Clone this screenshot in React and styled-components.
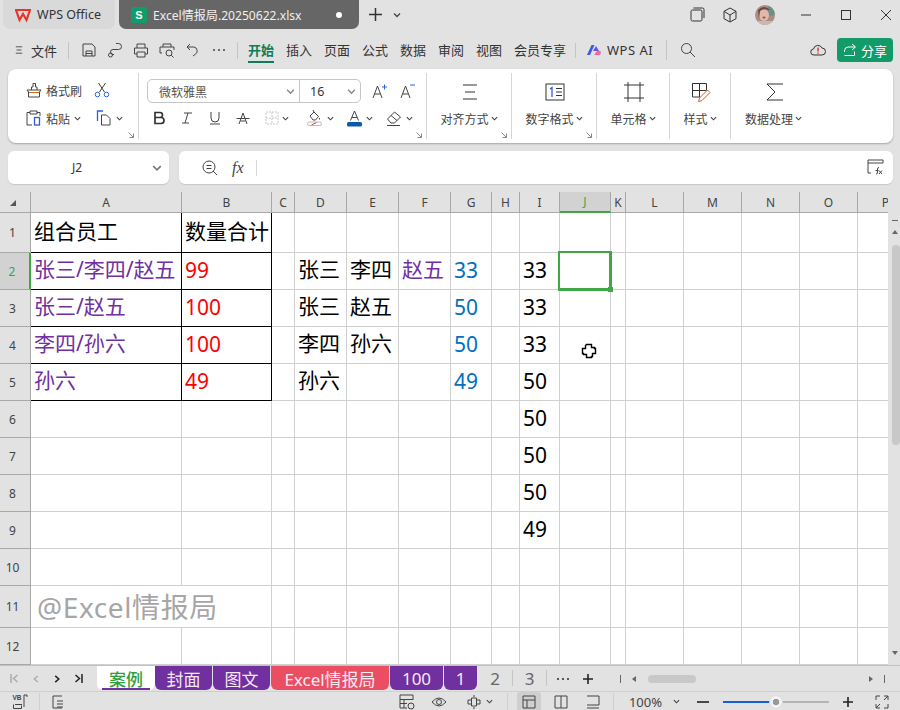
import React from 'react';
import styled, { createGlobalStyle } from 'styled-components';

const UI_FONT = `"Noto Sans", "Noto Sans CJK SC", sans-serif`;
const CJK_FONT = `"Noto Sans CJK SC", "Noto Sans", sans-serif`;

const COLUMNS = [
  ['A', 151], ['B', 90], ['C', 23], ['D', 52], ['E', 52], ['F', 52], ['G', 41], ['H', 28],
  ['I', 40], ['J', 51], ['K', 15], ['L', 58], ['M', 58], ['N', 58], ['O', 58], ['P', 56],
];
const ROW_HEIGHTS = [40, 37, 37, 37, 37, 37, 37, 37, 37, 37, 42, 37];

const PURPLE = '#7030a0';
const RED = '#ff0000';
const BLUE = '#0070c0';

const CELLS = {
  A1: { text: '组合员工', box: true, cjk: true },
  B1: { text: '数量合计', box: true, cjk: true },
  A2: { text: '张三/李四/赵五', color: PURPLE, box: true, cjk: true },
  B2: { text: '99', color: RED, box: true },
  D2: { text: '张三', cjk: true }, E2: { text: '李四', cjk: true }, F2: { text: '赵五', color: PURPLE, cjk: true },
  G2: { text: '33', color: BLUE }, I2: { text: '33' },
  A3: { text: '张三/赵五', color: PURPLE, box: true, cjk: true },
  B3: { text: '100', color: RED, box: true },
  D3: { text: '张三', cjk: true }, E3: { text: '赵五', cjk: true }, G3: { text: '50', color: BLUE }, I3: { text: '33' },
  A4: { text: '李四/孙六', color: PURPLE, box: true, cjk: true },
  B4: { text: '100', color: RED, box: true },
  D4: { text: '李四', cjk: true }, E4: { text: '孙六', cjk: true }, G4: { text: '50', color: BLUE }, I4: { text: '33' },
  A5: { text: '孙六', color: PURPLE, box: true, cjk: true },
  B5: { text: '49', color: RED, box: true },
  D5: { text: '孙六', cjk: true }, G5: { text: '49', color: BLUE }, I5: { text: '50' },
  I6: { text: '50' }, I7: { text: '50' }, I8: { text: '50' }, I9: { text: '49' },
};

const SHEETS = [
  { name: '封面', width: 57 },
  { name: '图文', width: 57 },
  { name: 'Excel情报局', width: 118, bg: '#e94e63' },
  { name: '100', width: 53 },
  { name: '1', width: 33 },
];

const MENU_TABS = ['插入', '页面', '公式', '数据', '审阅', '视图', '会员专享'];

const GlobalStyle = createGlobalStyle`
  html, body { margin: 0; padding: 0; background: #e2e2e2; }
  * { box-sizing: border-box; }
`;

const Glyph = styled.svg`
  width: ${p => p.$size || 16}px;
  height: ${p => p.$size || 16}px;
  flex: none;
  fill: none;
  stroke: ${p => p.$color || '#444'};
  stroke-width: ${p => p.$stroke || 1};
`;

const Chevron = ({ size = 7, color = '#444' }) => (
  <Glyph $size={size} $color={color} $stroke={1.3} viewBox="0 0 8 8">
    <path d="M1 2.5 4 5.5 7 2.5" />
  </Glyph>
);

const Page = styled.div`
  width: 900px;
  height: 710px;
  overflow: hidden;
  display: flex;
  flex-direction: column;
  background: #e2e2e2;
  font-family: ${UI_FONT};
  color: #333;
`;

/* title bar */
const TitleBar = styled.div`
  height: 29px;
  flex: none;
  display: flex;
  align-items: stretch;
  padding-left: 3px;
`;

const HomeTab = styled.div`
  width: 112px;
  display: flex;
  align-items: center;
  gap: 6px;
  padding-left: 12px;
  background: #d9d9d9;
  border-radius: 0 0 7px 7px;
  font-size: 12.5px;
  color: #333;
`;

const FileTab = styled.div`
  width: 240px;
  margin-left: 4px;
  display: flex;
  align-items: center;
  padding: 0 17px 0 12px;
  background: #666;
  border-radius: 0 0 7px 7px;
  color: #f0f0f0;
  font-size: 12.1px;
`;

const SheetBadge = styled.span`
  width: 16px;
  height: 16px;
  margin-right: 6px;
  border-radius: 2px;
  background: #0f9d68;
  color: #fff;
  font: bold 11px/16px "Liberation Sans", sans-serif;
  text-align: center;
`;

const FileName = styled.span`
  flex: 1;
  white-space: nowrap;
`;

const Dot = styled.span`
  width: 6px;
  height: 6px;
  border-radius: 50%;
  background: #fff;
`;

const AddTab = styled.div`
  margin-left: 9px;
  display: flex;
  align-items: center;
  gap: 10px;
`;

const ExtraTools = styled.div`
  margin-left: auto;
  display: flex;
  align-items: center;
  gap: 17px;
`;

const WindowButtons = styled.div`
  margin-left: 25px;
  display: flex;
  align-items: center;
  gap: 28px;
  padding-right: 8px;
`;

const Avatar = styled.svg`
  width: 20px;
  height: 20px;
  border-radius: 50%;
`;

/* menu bar */
const MenuBar = styled.div`
  height: 40px;
  flex: none;
  display: flex;
  align-items: center;
  padding: 2px 7px 0 15px;
  font-family: ${CJK_FONT};
  font-size: 13px;
  color: #333;
`;

const MenuLabel = styled.span`
  margin-left: 8px;
`;

const Divider = styled.span`
  width: 1px;
  height: ${p => p.$h || 17}px;
  margin: 0 ${p => p.$m || 11}px;
  background: #c4c4c4;
  flex: none;
`;

const QuickTools = styled.div`
  display: flex;
  align-items: center;
  gap: 10px;
  margin-left: 1px;
`;

const MenuTab = styled.span`
  position: relative;
  margin-right: 12px;
  white-space: nowrap;
  line-height: 18px;
  color: ${p => (p.$active ? '#0e7d57' : '#333')};
  font-weight: ${p => (p.$active ? 700 : 400)};
  width: ${p => p.$w || 26}px;
  ${p => p.$active && `
    &::after {
      content: "";
      position: absolute;
      left: 0;
      right: 0;
      bottom: -4px;
      height: 2px;
      background: #0e7d57;
    }
  `}
`;

const AiLabel = styled.span`
  margin-left: 5px;
  font-family: ${UI_FONT};
  font-size: 13px;
  letter-spacing: 0.5px;
`;

const MenuRight = styled.div`
  margin-left: auto;
  display: flex;
  align-items: center;
  gap: 11px;
`;

const ShareButton = styled.div`
  width: 56px;
  height: 24px;
  display: flex;
  align-items: center;
  justify-content: center;
  gap: 4px;
  border-radius: 4px;
  background: #129b68;
  color: #fff;
  font-size: 13px;
`;

/* ribbon */
const Ribbon = styled.div`
  height: 74px;
  flex: none;
  margin: 0 7px 0 8px;
  display: flex;
  padding: 4px 0;
  background: #fff;
  border-radius: 8px;
  box-shadow: 0 1px 2px rgba(0, 0, 0, 0.28);
  font-family: ${CJK_FONT};
  font-size: 12px;
  color: #444;
`;

const RibbonGroup = styled.div`
  position: relative;
  width: ${p => p.$w}px;
  flex: none;
  border-right: ${p => (p.$last ? 'none' : '1px solid #d6d6d6')};
  display: flex;
  flex-direction: ${p => (p.$stack ? 'column' : 'row')};
  align-items: ${p => (p.$stack ? 'center' : 'stretch')};
  padding-top: ${p => (p.$stack ? 9 : 0)}px;
`;

const Launcher = styled.svg`
  position: absolute;
  right: 4px;
  bottom: 1px;
  width: 6px;
  height: 6px;
  fill: none;
  stroke: #888;
`;

const StackIcon = styled.div`
  height: 20px;
  display: flex;
  align-items: center;
  justify-content: center;
  padding-left: 2px;
`;

const StackLabel = styled.div`
  margin-top: 7px;
  height: 18px;
  display: flex;
  align-items: center;
  gap: 2px;
  white-space: nowrap;
`;

const ToolColumn = styled.div`
  display: flex;
  flex-direction: column;
  gap: 10px;
  padding: 8px 0 0 18px;
`;

const ToolRow = styled.div`
  height: 18px;
  display: flex;
  align-items: center;
  gap: 4px;
`;

const ToolSpace = styled.span`
  width: ${p => p.$w}px;
  flex: none;
`;

const FontColumn = styled.div`
  display: flex;
  flex-direction: column;
  padding: 6px 0 0 8px;
`;

const FontRow = styled.div`
  height: 24px;
  display: flex;
  align-items: center;
`;

const FontSelect = styled.div`
  width: 214px;
  height: 24px;
  display: flex;
  border: 1px solid #c6c6c6;
  border-radius: 5px;
`;

const FontName = styled.div`
  width: 152px;
  display: flex;
  align-items: center;
  justify-content: space-between;
  padding: 0 4px 0 11px;
  border-right: 1px solid #c6c6c6;
  color: #555;
`;

const FontSize = styled.div`
  flex: 1;
  display: flex;
  align-items: center;
  justify-content: space-between;
  padding: 0 4px 0 10px;
  font-family: ${UI_FONT};
  font-size: 12.5px;
  color: #333;
`;

const GrowButtons = styled.div`
  display: flex;
  gap: 12px;
  margin-left: 11px;
`;

const FormatRow = styled.div`
  height: 20px;
  margin-top: 5px;
  display: flex;
  align-items: center;
  padding-left: 5px;
`;

const FormatSlot = styled.div`
  width: ${p => p.$w || 28}px;
  flex: none;
  display: flex;
  align-items: center;
  gap: 3px;
`;

/* formula bar */
const FormulaRow = styled.div`
  height: 33px;
  flex: none;
  margin: 8px 7px 8px 8px;
  display: flex;
  gap: 10px;
`;

const NameBox = styled.div`
  width: 161px;
  display: flex;
  align-items: center;
  padding: 0 7px 0 64px;
  justify-content: space-between;
  background: #fff;
  border-radius: 6px;
  box-shadow: 0 1px 1px rgba(0, 0, 0, 0.12);
  font-size: 12px;
  color: #333;
`;

const FormulaBox = styled.div`
  flex: 1;
  display: flex;
  align-items: center;
  padding: 0 9px 0 23px;
  background: #fff;
  border-radius: 6px;
  box-shadow: 0 1px 1px rgba(0, 0, 0, 0.12);
`;

const FxText = styled.span`
  margin: 0 12px 0 14px;
  font: italic 16px "Liberation Serif", serif;
  color: #444;
`;

const FormulaEntry = styled.div`
  flex: 1;
  height: 16px;
  border-left: 1px solid #d6d6d6;
`;

/* sheet grid */
const SheetArea = styled.div`
  height: 473px;
  flex: none;
  display: flex;
`;

const GridClip = styled.div`
  width: 890px;
  overflow: hidden;
`;

const Grid = styled.div`
  display: grid;
  width: max-content;
  grid-template-columns: 31px ${COLUMNS.map(c => `${c[1]}px`).join(' ')};
  grid-template-rows: 21px ${ROW_HEIGHTS.map(h => `${h}px`).join(' ')};
`;

const Corner = styled.div`
  display: flex;
  align-items: flex-end;
  justify-content: flex-end;
  padding: 0 14px 6px 0;
  border-right: 1px solid #a8a8a8;
  border-bottom: 1px solid #a8a8a8;
`;

const CornerMark = styled.span`
  width: 0;
  height: 0;
  border-left: 6px solid transparent;
  border-bottom: 6px solid #555;
`;

const ColHead = styled.div`
  display: flex;
  align-items: center;
  justify-content: center;
  font-size: 12px;
  color: ${p => (p.$active ? '#3aa63f' : '#444')};
  background: ${p => (p.$active ? '#d2d2d2' : '#e2e2e2')};
  border-right: 1px solid #a8a8a8;
  border-bottom: ${p => (p.$active ? '2px solid #3fa845' : '1px solid #a8a8a8')};
`;

const RowHead = styled.div`
  display: flex;
  align-items: center;
  justify-content: center;
  padding-right: 5px;
  font-size: 12px;
  color: ${p => (p.$active ? '#3aa63f' : '#444')};
  background: ${p => (p.$active ? '#d2d2d2' : '#e2e2e2')};
  border-right: ${p => (p.$active ? '2px solid #3fa845' : '1px solid #a8a8a8')};
  border-bottom: 1px solid #a8a8a8;
`;

const Cell = styled.div`
  position: relative;
  z-index: ${p => (p.$selected ? 2 : 0)};
  display: flex;
  align-items: center;
  padding: 0 0 ${p => (p.$cjk ? 6 : 3)}px 3px;
  white-space: nowrap;
  background: #fff;
  font-family: ${UI_FONT};
  font-size: 21px;
  color: ${p => p.$color || '#000'};
  border-right: 1px solid ${p => (p.$box ? '#000' : '#d0d0d0')};
  border-bottom: 1px solid ${p => (p.$box ? '#000' : '#d0d0d0')};
  grid-column: ${p => (p.$span ? `span ${p.$span}` : 'auto')};
  ${p => p.$selected && `
    &::before {
      content: "";
      position: absolute;
      inset: -2px -2px -2px -2px;
      border: solid #3fa845;
      border-width: 2px 3px 3px 2px;
    }
    &::after {
      content: "";
      position: absolute;
      right: -3px;
      bottom: -3px;
      width: 5px;
      height: 5px;
      background: #3fa845;
    }
  `}
`;

const Watermark = styled.span`
  font-size: 28px;
  font-weight: 400;
  color: #a6a6a6;
  padding: 2px 0 0 3px;
  letter-spacing: 0.6px;
`;

const CursorMark = styled.svg`
  position: absolute;
  left: 21px;
  top: 16px;
  width: 16px;
  height: 16px;
  z-index: 3;
`;

const VScroll = styled.div`
  flex: 1;
  display: flex;
  flex-direction: column;
  align-items: flex-start;
  padding: 28px 0 0 4px;
  background: #e2e2e2;
`;

const ScrollCap = styled.span`
  width: 6px;
  height: 1px;
  background: #666;
`;

const ScrollArrow = styled.span`
  width: 0;
  height: 0;
  margin: ${p => p.$m || '9px 0 0'};
  border-left: 3px solid transparent;
  border-right: 3px solid transparent;
  ${p => (p.$down ? 'border-top: 4px solid #666;' : 'border-bottom: 4px solid #666;')}
`;

const ScrollThumb = styled.span`
  width: 8px;
  height: 200px;
  margin-top: 11px;
  margin-bottom: auto;
  border-radius: 4px;
  background: #c8c8c8;
`;

/* sheet tabs */
const TabBar = styled.div`
  height: 27px;
  flex: none;
  display: flex;
  align-items: flex-start;
  border-top: 1px solid #c2c2c2;
  border-bottom: 1px solid #cfcfcf;
`;

const NavButtons = styled.div`
  width: 97px;
  height: 25px;
  flex: none;
  display: flex;
  align-items: center;
  padding-left: 10px;
  gap: 13px;
`;

const ActiveSheet = styled.div`
  position: relative;
  width: 58px;
  height: 24px;
  flex: none;
  display: flex;
  align-items: center;
  justify-content: center;
  background: #fff;
  border-radius: 0 0 6px 6px;
  font-family: ${CJK_FONT};
  font-size: 17px;
  font-weight: 500;
  color: #2f9e3c;
  &::after {
    content: "";
    position: absolute;
    left: 5px;
    right: 5px;
    bottom: 0;
    height: 2px;
    background: ${PURPLE};
  }
`;

const SheetTab = styled.div`
  width: ${p => p.$w}px;
  height: 24px;
  flex: none;
  margin-right: 1px;
  display: flex;
  align-items: center;
  justify-content: center;
  background: ${p => p.$bg || PURPLE};
  border-radius: 0 0 6px 6px;
  color: #f6e9f3;
  font-size: 17px;
  font-family: ${UI_FONT};
`;

const PlainSheet = styled.div`
  width: ${p => p.$w}px;
  height: 24px;
  flex: none;
  display: flex;
  align-items: center;
  justify-content: center;
  font-size: 17px;
  color: #666;
`;

const TabSep = styled.span`
  width: 1px;
  height: 16px;
  margin-top: 4px;
  flex: none;
  background: #c4c4c4;
`;

const TabTools = styled.div`
  width: 58px;
  height: 25px;
  flex: none;
  display: flex;
  align-items: center;
  justify-content: space-between;
  padding: 0 11px 0 9px;
`;

const HScroll = styled.div`
  flex: 1;
  height: 25px;
  display: flex;
  align-items: center;
  padding: 0 12px;
  gap: 8px;
`;

const HThumb = styled.span`
  width: 48px;
  height: 8px;
  border-radius: 4px;
  background: #c8c8c8;
  margin-left: 4px;
  margin-right: auto;
`;

const HCap = styled.span`
  width: 1px;
  height: 8px;
  background: #666;
  margin: 0 3px;
`;

const HArrow = styled.span`
  width: 0;
  height: 0;
  border-top: 3px solid transparent;
  border-bottom: 3px solid transparent;
  ${p => (p.$right ? 'border-left: 4px solid #666;' : 'border-right: 4px solid #666;')}
`;

/* status bar */
const StatusBar = styled.div`
  height: 19px;
  flex: none;
  display: flex;
  align-items: center;
  padding: 0 11px 0 12px;
  font-size: 13px;
  color: #444;
`;

const StatusSep = styled.span`
  width: 1px;
  height: 18px;
  margin: ${p => p.$m || '0 12px'};
  background: #cfcfcf;
  flex: none;
`;

const ViewButton = styled.div`
  width: 24px;
  height: 19px;
  display: flex;
  align-items: center;
  justify-content: center;
  background: ${p => (p.$active ? '#cfcfcf' : 'transparent')};
  border-radius: 3px 3px 0 0;
  margin-right: ${p => p.$mr || 8}px;
`;

const ZoomValue = styled.span`
  margin-right: 11px;
  width: 48px;
  text-align: right;
`;

const SliderTrack = styled.div`
  position: relative;
  width: 106px;
  height: 2px;
  margin: 0 13px 0 14px;
  background: linear-gradient(to right, #1a5fd0 0 48px, #b4b4b4 48px);
`;

const SliderKnob = styled.span`
  position: absolute;
  left: 47px;
  top: -5px;
  width: 12px;
  height: 12px;
  border-radius: 50%;
  background: radial-gradient(circle, #999 0 3px, #f2f2f2 3.5px);
  box-shadow: 0 0 0 1px #ddd;
`;

const StatusSpace = styled.span`
  width: ${p => p.$w}px;
  flex: none;
`;

const Spacer = styled.span`
  margin-left: auto;
`;

const FormatPainterIcon = () => (
  <Glyph viewBox="0 0 16 16">
    <path d="M1 8h14l-1.500 2v5h-11v-5zM5.500 8V5H7V1.500h2.500V5H11v3" />
    <path d="M3 10.500h10" stroke="#d2691e" />
  </Glyph>
);

const ScissorsIcon = () => (
  <Glyph viewBox="0 0 16 16">
    <path d="M4.500 1 10.500 10M11.500 1 5.500 10" />
    <circle cx="3.500" cy="12.500" r="2.300" stroke="#2a62d6" />
    <circle cx="12.500" cy="12.500" r="2.300" stroke="#2a62d6" />
  </Glyph>
);

const PasteIcon = () => (
  <Glyph viewBox="0 0 16 16">
    <path d="M4 2.500H1V15h5M11 2.500h3V6M4 1h7v3H4z" />
    <rect x="8.500" y="7.500" width="5" height="7.500" stroke="#2a62d6" strokeWidth="1.300" />
  </Glyph>
);

const CopyIcon = () => (
  <Glyph viewBox="0 0 16 16">
    <path d="M7 1H1.500v10" stroke="#2a62d6" strokeWidth="1.300" />
    <path d="M5.500 5h5l3.500 3.500V15H5.500z" />
  </Glyph>
);

const AlignIcon = () => (
  <Glyph $size={18} viewBox="0 0 18 18" $color="#333">
    <path d="M2 2h14M4 9h10M2 16h14" />
  </Glyph>
);

const NumberIcon = () => (
  <Glyph $size={20} viewBox="0 0 20 20" $color="#333">
    <rect x="1" y="2" width="18" height="16" />
    <path d="M5 7l2-1.500V15" stroke="#2a62d6" strokeWidth="1.300" />
    <path d="M11 6.500h6M11 10h6M11 13.500h6" />
  </Glyph>
);

const CellIcon = () => (
  <Glyph $size={20} viewBox="0 0 20 20" $color="#333">
    <path d="M4 0v20M16 0v20M0 3h20M0 16h20" />
  </Glyph>
);

const StyleIcon = () => (
  <Glyph $size={21} viewBox="0 0 21 21" $color="#333">
    <path d="M9 15H1.500V1.500h14V8M8.500 1.500V15M1.500 8.500h14" />
    <path d="M7.500 19.500l1-3.500 8-8 2.500 2.500-8 8z" stroke="#c8642a" />
  </Glyph>
);

const SigmaIcon = () => (
  <Glyph $size={20} viewBox="0 0 20 20" $color="#333">
    <path d="M18 2H2l8 8-8 8h16" />
  </Glyph>
);

const Launch = () => (
  <Launcher viewBox="0 0 6 6"><path d="M0.500 0.500 5.500 5.500M5.500 1.500v4h-4" /></Launcher>
);

const Sheet = () => (
  <Grid>
    <Corner><CornerMark /></Corner>
    {COLUMNS.map(([name]) => <ColHead key={name} $active={name === 'J'}>{name}</ColHead>)}
    {ROW_HEIGHTS.map((_, i) => {
      const row = i + 1;
      if (row === 11) {
        return (
          <React.Fragment key={row}>
            <RowHead>{row}</RowHead>
            <Cell $span={2}><Watermark>@Excel情报局</Watermark></Cell>
            {COLUMNS.slice(2).map(([name]) => <Cell key={name} />)}
          </React.Fragment>
        );
      }
      return (
        <React.Fragment key={row}>
          <RowHead $active={row === 2}>{row}</RowHead>
          {COLUMNS.map(([name]) => {
            const cell = CELLS[`${name}${row}`] || {};
            return (
              <Cell
                key={name}
                $color={cell.color}
                $box={cell.box}
                $cjk={cell.cjk}
                $selected={name === 'J' && row === 2}
              >
                {cell.text}
                {name === 'J' && row === 4 && (
                  <CursorMark viewBox="0 0 16 16">
                    <path d="M5.500 1.500h5v3h3v1h1v5h-3v3h-1v1h-5v-3h-3v-1h-1v-5h3v-3z" fill="#fff" stroke="#000" strokeWidth="1.400" />
                  </CursorMark>
                )}
              </Cell>
            );
          })}
        </React.Fragment>
      );
    })}
  </Grid>
);

export default function App() {
  return (
    <Page>
      <GlobalStyle />
      <TitleBar>
        <HomeTab>
          <Glyph $size={16} viewBox="0 0 16 16" $color="#e8352b" $stroke={2.2}>
            <path d="M1 3h14l-3.500 10L8 7l-3.500 6z" />
          </Glyph>
          WPS Office
        </HomeTab>
        <FileTab>
          <SheetBadge>S</SheetBadge>
          <FileName>Excel情报局.20250622.xlsx</FileName>
          <Dot />
        </FileTab>
        <AddTab>
          <Glyph $size={15} viewBox="0 0 15 15" $color="#333" $stroke={1.5}>
            <path d="M7.500 1v13M1 7.500h13" />
          </Glyph>
          <Chevron size={8} />
        </AddTab>
        <ExtraTools>
          <Glyph $size={15} viewBox="0 0 15 15" $color="#333">
            <rect x="1" y="3" width="11" height="11" rx="1.500" />
            <path d="M3.500 1h9q1.500 0 1.500 1.500V11" />
          </Glyph>
          <Glyph $size={16} viewBox="0 0 16 16" $color="#333">
            <path d="M8 1l6 3.300v7.400L8 15l-6-3.300V4.300zM2 4.300 8 8l6-3.700M8 8v7" />
          </Glyph>
          <Avatar viewBox="0 0 20 20">
            <rect width="20" height="20" fill="#a88f86" />
            <circle cx="16" cy="6" r="5" fill="#6e8f88" />
            <ellipse cx="9" cy="10" rx="5" ry="6" fill="#e3b7a9" />
            <path d="M3 5Q9-1 15 5L13 5Q9 3 5 6L4 14z" fill="#6a4a40" />
            <ellipse cx="9" cy="12.500" rx="1.500" ry="1" fill="#a14a4a" />
            <rect y="16" width="20" height="4" fill="#c9b9b2" />
          </Avatar>
        </ExtraTools>
        <WindowButtons>
          <Glyph $size={12} viewBox="0 0 12 12" $color="#333">
            <path d="M1 6h10" />
          </Glyph>
          <Glyph $size={12} viewBox="0 0 12 12" $color="#333">
            <rect x="1.500" y="1.500" width="9" height="9" />
          </Glyph>
          <Glyph $size={12} viewBox="0 0 12 12" $color="#333">
            <path d="M1 1l10 10M11 1 1 11" />
          </Glyph>
        </WindowButtons>
      </TitleBar>

      <MenuBar>
        <Glyph $size={8} viewBox="0 0 8 10" $color="#333">
          <path d="M0 1h8M1 5h6M0 9h8" />
        </Glyph>
        <MenuLabel>文件</MenuLabel>
        <Divider />
        <QuickTools>
          <Glyph viewBox="0 0 16 16">
            <path d="M2 2h9l3 3v9H2zM5 14V9h6v5M5 11.500h6" />
          </Glyph>
          <Glyph viewBox="0 0 16 16">
            <path d="M9 1.500h2.500a2.500 2.500 0 0 1 0 6H6a2.500 2.500 0 0 0 0 5H7" />
            <circle cx="3.500" cy="13" r="2" />
          </Glyph>
          <Glyph viewBox="0 0 16 16">
            <path d="M4 6V2h8v4M4 12H1.500V6h13v6H12M4 10h8v5H4z" />
          </Glyph>
          <Glyph viewBox="0 0 16 16">
            <path d="M4 5V2h8v3M3 11H1V5h14v3" />
            <circle cx="10" cy="11" r="3" />
            <path d="M12.200 13.200 14.500 15.500" />
          </Glyph>
          <Glyph viewBox="0 0 16 16">
            <path d="M5 2 2 5l3 3M2.500 5H9a4 4 0 0 1 1 7.500L8 14" />
          </Glyph>
          <Glyph viewBox="0 0 16 16">
            <circle cx="3" cy="8" r=".6" fill="#444" />
            <circle cx="8" cy="8" r=".6" fill="#444" />
            <circle cx="13" cy="8" r=".6" fill="#444" />
          </Glyph>
        </QuickTools>
        <Divider $m={10} />
        <MenuTab $active>开始</MenuTab>
        {MENU_TABS.map(tab => (
          <MenuTab key={tab} $w={tab.length * 13}>{tab}</MenuTab>
        ))}
        <Divider $h={15} $m={0} style={{ marginLeft: -3, marginRight: 10 }} />
        <Glyph $size={16} viewBox="0 0 16 16" $color="none">
          <path d="M1 13 5.500 3h3L4 13z" fill="#3a5bea" />
          <path d="M7 9l3-5 3 5z" fill="#6a4df0" />
          <path d="M8 13l3-4h3.500q1 2-.5 4z" fill="#f06aa8" />
        </Glyph>
        <AiLabel>WPS AI</AiLabel>
        <Divider $h={20} $m={13} />
        <Glyph viewBox="0 0 16 16" $color="#444">
          <circle cx="6.500" cy="6.500" r="5" />
          <path d="M10 10l5 5" />
        </Glyph>
        <MenuRight>
          <Glyph $size={16} viewBox="0 0 16 16" $color="#333">
            <path d="M4 13a3 3 0 0 1-.5-6A4.500 4.500 0 0 1 12 6a3.500 3.500 0 0 1 0 7z" />
            <path d="M8 5.500v4M8 10.500v1.200" stroke="#d8232a" strokeWidth="1.300" />
          </Glyph>
          <ShareButton>
            <Glyph $size={14} viewBox="0 0 14 14" $color="#fff">
              <path d="M9 1l3.500 3L9 7M12 4H5Q1.500 4 1.500 8v1M1.500 12.500h10v-4" />
            </Glyph>
            分享
          </ShareButton>
        </MenuRight>
      </MenuBar>

      <Ribbon>
        <RibbonGroup $w={131}>
          <ToolColumn>
            <ToolRow>
              <FormatPainterIcon />
              格式刷
              <ToolSpace $w={4} />
              <ScissorsIcon />
            </ToolRow>
            <ToolRow>
              <PasteIcon />
              粘贴
              <Chevron />
              <ToolSpace $w={7} />
              <CopyIcon />
              <Chevron />
            </ToolRow>
          </ToolColumn>
          <Launch />
        </RibbonGroup>
        <RibbonGroup $w={288}>
          <FontColumn>
            <FontRow>
              <FontSelect>
                <FontName>微软雅黑<Chevron size={9} color="#888" /></FontName>
                <FontSize>16<Chevron size={9} color="#888" /></FontSize>
              </FontSelect>
              <GrowButtons>
                <Glyph viewBox="0 0 16 16">
                  <path d="M1 15 5.500 3 10 15M2.500 11h6" />
                  <path d="M10 4h5M12.500 1.500v5" stroke="#2a62d6" />
                </Glyph>
                <Glyph viewBox="0 0 16 16">
                  <path d="M1 15 5.500 3 10 15M2.500 11h6" />
                  <path d="M10 2h5" stroke="#2a62d6" />
                </Glyph>
              </GrowButtons>
            </FontRow>
            <FormatRow>
              <FormatSlot>
                <Glyph $size={14} viewBox="0 0 14 14" $color="#333" $stroke={1.7}>
                  <path d="M3 1.500h5a2.500 2.500 0 0 1 0 5H3h6a2.800 2.800 0 0 1 0 6H3z" />
                </Glyph>
              </FormatSlot>
              <FormatSlot>
                <Glyph $size={14} viewBox="0 0 14 14">
                  <path d="M4 2h8M8 2 5 12M2 12h7" />
                </Glyph>
              </FormatSlot>
              <FormatSlot>
                <Glyph $size={14} viewBox="0 0 14 14">
                  <path d="M3 1v6a4 4 0 0 0 8 0V1M2 13h10" />
                </Glyph>
              </FormatSlot>
              <FormatSlot $w={29}>
                <Glyph $size={14} viewBox="0 0 14 14">
                  <path d="M3 13 7 2l4 11M0.500 7.500h13M4.500 10h5" />
                </Glyph>
              </FormatSlot>
              <FormatSlot $w={41}>
                <Glyph $size={14} viewBox="0 0 14 14" $color="#c8c8c8" style={{ strokeDasharray: '2 1' }}>
                  <path d="M1 1h12v12H1zM7 1v12M1 7h12" />
                </Glyph>
                <Chevron />
              </FormatSlot>
              <FormatSlot $w={40}>
                <Glyph $size={18} viewBox="0 0 18 18">
                  <path d="M4 7l4-4 4.500 4.500L9.500 11H7zM8 3 7 1M13.500 9v1.500" />
                  <rect x="1.500" y="13" width="14" height="3.500" rx="1.700" stroke="#bbb" />
                  <path d="M5.500 16l5-2.500" stroke="#e2473a" />
                </Glyph>
                <Chevron />
              </FormatSlot>
              <FormatSlot $w={40}>
                <Glyph $size={17} viewBox="0 0 17 17">
                  <path d="M4.500 10.500 8.500 1l4 9.500M6 7.500h5" />
                  <rect x="1" y="12" width="15" height="4.500" rx="1.500" fill="#0c5aa8" stroke="none" />
                </Glyph>
                <Chevron />
              </FormatSlot>
              <FormatSlot $w={30}>
                <Glyph $size={17} viewBox="0 0 17 17">
                  <path d="M1.500 9 8.500 2l6 5-6 6H5zM5 5.500l6 5M1 15.500h13" />
                </Glyph>
                <Chevron />
              </FormatSlot>
            </FormatRow>
          </FontColumn>
          <Launch />
        </RibbonGroup>
        <RibbonGroup $w={85} $stack>
          <StackIcon><AlignIcon /></StackIcon>
          <StackLabel>对齐方式<Chevron /></StackLabel>
          <Launch />
        </RibbonGroup>
        <RibbonGroup $w={85} $stack>
          <StackIcon><NumberIcon /></StackIcon>
          <StackLabel>数字格式<Chevron /></StackLabel>
          <Launch />
        </RibbonGroup>
        <RibbonGroup $w={73} $stack>
          <StackIcon><CellIcon /></StackIcon>
          <StackLabel>单元格<Chevron /></StackLabel>
        </RibbonGroup>
        <RibbonGroup $w={61} $stack>
          <StackIcon><StyleIcon /></StackIcon>
          <StackLabel>样式<Chevron /></StackLabel>
        </RibbonGroup>
        <RibbonGroup $w={85} $stack $last>
          <StackIcon><SigmaIcon /></StackIcon>
          <StackLabel>数据处理<Chevron /></StackLabel>
        </RibbonGroup>
      </Ribbon>

      <FormulaRow>
        <NameBox>J2<Chevron size={10} color="#777" /></NameBox>
        <FormulaBox>
          <Glyph viewBox="0 0 16 16">
            <circle cx="7" cy="7" r="6" />
            <path d="M4.500 5.500h5M4.500 8.500h5M11 11l4 4" />
          </Glyph>
          <FxText>fx</FxText>
          <FormulaEntry />
          <Glyph $size={17} viewBox="0 0 17 17">
            <path d="M1 7V1h15v3M1 4h15M1 7v7h3" />
            <path d="M9 15q1.500 0 1.500-2V10q0-1.500 1.500-1.500M8.500 11.500h3M12 11.500l3 3.500M15 11.500 12 15" />
          </Glyph>
        </FormulaBox>
      </FormulaRow>

      <SheetArea>
        <GridClip><Sheet /></GridClip>
        <VScroll>
          <ScrollCap />
          <ScrollArrow />
          <ScrollThumb />
          <ScrollArrow $down $m="0 0 10px" />
        </VScroll>
      </SheetArea>

      <TabBar>
        <NavButtons>
          <Glyph $size={9} viewBox="0 0 9 9" $color="#aaa" $stroke={1.5}>
            <path d="M1 0v9M7.500 1 3.500 4.500 7.500 8" />
          </Glyph>
          <Glyph $size={8} viewBox="0 0 8 9" $color="#aaa" $stroke={1.5}>
            <path d="M6 1 2 4.500 6 8" />
          </Glyph>
          <Glyph $size={8} viewBox="0 0 8 9" $color="#222" $stroke={1.7}>
            <path d="M2 1l4 3.500L2 8" />
          </Glyph>
          <Glyph $size={9} viewBox="0 0 9 9" $color="#222" $stroke={1.5}>
            <path d="M8 0v9M1.500 1l4 3.500L1.500 8" />
          </Glyph>
        </NavButtons>
        <ActiveSheet>案例</ActiveSheet>
        {SHEETS.map(s => (
          <SheetTab key={s.name} $w={s.width} $bg={s.bg}>{s.name}</SheetTab>
        ))}
        <PlainSheet $w={34}>2</PlainSheet>
        <TabSep />
        <PlainSheet $w={33}>3</PlainSheet>
        <TabSep />
        <TabTools>
          <Glyph $size={14} viewBox="0 0 14 14">
            <circle cx="2" cy="7" r=".7" fill="#222" />
            <circle cx="7" cy="7" r=".7" fill="#222" />
            <circle cx="12" cy="7" r=".7" fill="#222" />
          </Glyph>
          <Glyph $size={12} viewBox="0 0 12 12" $color="#222" $stroke={1.6}>
            <path d="M6 1v10M1 6h10" />
          </Glyph>
        </TabTools>
        <HScroll>
          <HCap />
          <HArrow />
          <HThumb />
          <HArrow $right />
          <HCap />
        </HScroll>
      </TabBar>

      <StatusBar>
        <Glyph $size={16} viewBox="0 0 16 16">
          <text x="0.500" y="6" fontSize="6.500" fontFamily="Liberation Sans" fontWeight="700" fill="#444" stroke="none">VB</text>
          <path d="M1.500 10.500v4h8v-3M12 1h3v2M12 1v12M3 10.500h7" />
        </Glyph>
        <StatusSep $m="0 11px" />
        <Glyph $size={14} viewBox="0 0 14 14">
          <path d="M11 1H2v12h9M6 6h6M6 9h6M6 12h6" />
        </Glyph>
        <Spacer />
        <Glyph $size={16} viewBox="0 0 16 16">
          <path d="M1 1h13v5M1 1v13h7M1 5.500h13M1 9.500h7M5 5.500V14" />
          <circle cx="12" cy="12" r="3" />
        </Glyph>
        <StatusSpace $w={16} />
        <Glyph $size={16} viewBox="0 0 16 16">
          <path d="M1 8q7-8 14 0-7 8-14 0z" />
          <circle cx="8" cy="8" r="2.500" />
        </Glyph>
        <StatusSpace $w={20} />
        <Glyph $size={14} viewBox="0 0 14 14">
          <path d="M4.500 3h5v8h-5zM4.500 5H1v4h3.500M9.500 5H13v4H9.500M6 1h2M6 13h2" />
        </Glyph>
        <StatusSpace $w={5} />
        <Chevron />
        <StatusSep $m="0 9px 0 14px" />
        <ViewButton $active>
          <Glyph $size={14} viewBox="0 0 14 14">
            <path d="M1 1h12v12H1zM1 5h12M5 5v8" />
          </Glyph>
        </ViewButton>
        <ViewButton>
          <Glyph $size={14} viewBox="0 0 14 14">
            <path d="M1 1h12v12H1zM7 1v12" />
          </Glyph>
        </ViewButton>
        <ViewButton $mr={8}>
          <Glyph $size={14} viewBox="0 0 14 14">
            <path d="M1 1h12v9H1M1 13h12" />
          </Glyph>
        </ViewButton>
        <StatusSep $m="0" />
        <ZoomValue>100%</ZoomValue>
        <Chevron />
        <StatusSpace $w={17} />
        <Glyph $size={12} viewBox="0 0 12 12" $color="#222" $stroke={1.6}>
          <path d="M0 6h12" />
        </Glyph>
        <SliderTrack><SliderKnob /></SliderTrack>
        <Glyph $size={12} viewBox="0 0 12 12" $color="#222" $stroke={1.6}>
          <path d="M6 1v10M1 6h10" />
        </Glyph>
        <StatusSpace $w={21} />
        <Glyph $size={14} viewBox="0 0 14 14">
          <path d="M9 1h4v4M13 1 9 5M5 13H1V9M1 13l4-4M1 5V1h4M13 9v4H9" />
        </Glyph>
      </StatusBar>
    </Page>
  );
}
